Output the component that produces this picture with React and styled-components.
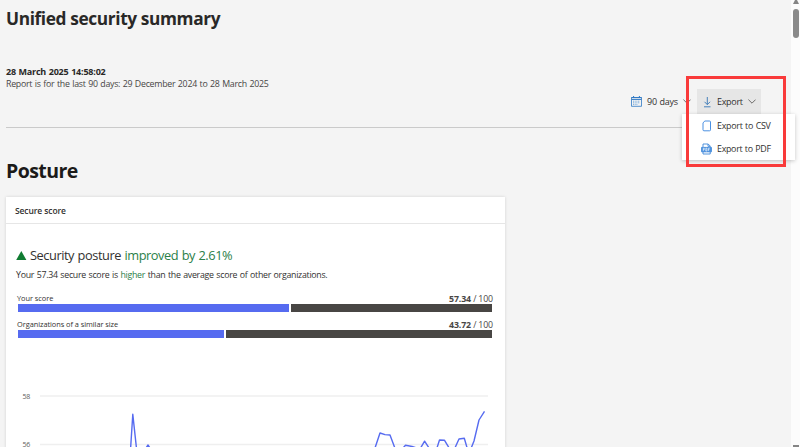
import React from "react";
import styled, { createGlobalStyle } from "styled-components";

const GlobalStyle = createGlobalStyle`
  * { box-sizing: border-box; }
  body { margin: 0; background: #f4f4f4; overflow: hidden; }
`;

const Screen = styled.div`
  display: flex;
  width: 800px;
  height: 447px;
  overflow: hidden;
  background: #f4f4f4;
  color: #323130;
  font-family: "Open Sans", "Noto Sans", sans-serif;
`;

const Main = styled.main`
  flex: 1;
  min-width: 0;
  padding-left: 6px;
`;

const Text = styled.span`
  display: block;
  white-space: nowrap;
  font-size: ${(p) => p.$size}px;
  font-weight: ${(p) => p.$weight || 400};
  line-height: ${(p) => p.$line || 12}px;
  letter-spacing: ${(p) => p.$track || 0}px;
  word-spacing: ${(p) => p.$words || 0}px;
  color: ${(p) => p.$color || "inherit"};
`;

const PageTitle = styled.h1`
  margin: 0;
  padding-top: 7px;
  height: 65px;
  font-size: 17.3px;
  font-weight: 700;
  line-height: 24px;
  letter-spacing: -0.38px;
  color: #292827;
  white-space: nowrap;
`;

const Period = styled.div`
  display: grid;
  grid-template-rows: 13px 11px;
  height: 24px;
`;

const Toolbar = styled.div`
  display: flex;
  justify-content: flex-end;
  height: 25px;
  padding-right: 30px;
`;

const ToolButton = styled.button`
  display: flex;
  align-items: center;
  gap: ${(p) => p.$gap}px;
  width: ${(p) => p.$width}px;
  height: 25px;
  padding: 0 0 0 5px;
  border: 0;
  font-family: inherit;
  color: #323130;
  background: ${(p) => (p.$open ? "#e6e6e6" : "transparent")};
`;

const MenuAnchor = styled.div`
  position: relative;
`;

const Menu = styled.div`
  position: absolute;
  z-index: 2;
  top: 25px;
  left: -15px;
  width: 113px;
  height: 46px;
  background: #fff;
  box-shadow: 0 1px 4px rgba(0, 0, 0, 0.22);
`;

const MenuItem = styled.div`
  display: flex;
  align-items: center;
  gap: 5px;
  height: 23px;
  padding-left: 19px;
`;

const Highlight = styled.div`
  position: absolute;
  z-index: 3;
  top: -13px;
  left: -11px;
  width: 100px;
  height: 91px;
  border: 3px solid #f93a3a;
  pointer-events: none;
`;

const Rule = styled.hr`
  margin: 12.5px 0 0;
  width: 784px;
  max-width: 100%;
  border: 0;
  height: 1px;
  background: #cacaca;
`;

const SectionTitle = styled.h2`
  margin: 0;
  height: 69.5px;
  padding-top: 29px;
  font-size: 19.5px;
  font-weight: 700;
  line-height: 28px;
  letter-spacing: -0.55px;
  color: #1b1a19;
`;

const Card = styled.section`
  width: 499px;
  height: 270px;
  background: #fff;
  box-shadow: 0 0 3px rgba(0, 0, 0, 0.14);
`;

const CardHeader = styled.header`
  height: 27px;
  padding: 8px 9px 0;
  border-bottom: 1px solid #e6e6e6;
`;

const Headline = styled.div`
  display: flex;
  align-items: center;
  gap: 3px;
  height: 20px;
  margin: 21px 0 0 10px;
`;

const Summary = styled.div`
  margin: 4px 0 11px 10px;
  height: 12px;
`;

const Green = styled.span`
  color: #2b8049;
`;

const Score = styled.div`
  width: 477px;
  height: 26px;
  margin-left: 11px;
`;

const ScoreLabels = styled.div`
  display: flex;
  justify-content: space-between;
  height: 12px;
  padding-right: 1px;
`;

const ScoreBar = styled.div`
  display: grid;
  grid-template-columns: ${(p) => p.$value}fr ${(p) => 100 - p.$value}fr;
  gap: 2px;
  width: 474px;
  height: 8px;
  margin-left: 1px;
`;

const Segment = styled.div`
  background: ${(p) => (p.$filled ? "#566bf0" : "#484644")};
`;

const Chart = styled.div`
  display: grid;
  grid-template-columns: 24px 450px;
  height: 70px;
  margin-top: 45px;
`;

const Axis = styled.div`
  display: grid;
  grid-template-rows: 48px 12px;
  padding-top: 2px;
  text-align: right;
`;

const Plot = styled.svg`
  display: block;
  margin-left: 10px;
  width: 450px;
  height: 61px;
`;

const Scrollbar = styled.aside`
  display: flex;
  flex-direction: column;
  justify-content: space-between;
  align-items: center;
  width: 9px;
  height: 447px;
  padding-left: 1px;
  background: #fcfcfc;
`;

const Thumb = styled.div`
  width: 6px;
  height: 29px;
  margin-top: 5px;
  border-radius: 3px;
  background: #8a8a8a;
`;

const Chevron = () => (
  <svg width="8" height="5" viewBox="0 0 8 5" fill="none" stroke="#605e5c" strokeWidth="0.9">
    <path d="M.4.6 4 4.2 7.6.6" />
  </svg>
);

const CalendarIcon = () => (
  <svg width="11" height="11" viewBox="0 0 11 11" fill="none" stroke="#2f78c4">
    <path d="M.5 1.5h10v8.8H.5z" strokeWidth=".8" />
    <path d="M.5 1.6h10M.5 3.4h10M2.6 0v2M8.4 0v2" strokeWidth="1" />
    <path d="M2 5.2h7M2 6.8h7M2 8.4h5" stroke="#5b9bd8" strokeWidth=".8" strokeDasharray="1 .7" />
  </svg>
);

const DownloadIcon = () => (
  <svg width="10" height="12" viewBox="0 0 10 12" fill="none" stroke="#3676b5" strokeWidth=".9">
    <path d="M5.3 1v7.5M2.5 5.8l2.8 2.8 2.8-2.8M2 10.8h6.5" />
  </svg>
);

const PageIcon = () => (
  <svg width="11" height="12" viewBox="0 0 11 12" fill="none" stroke="#4a90e2" strokeWidth="1">
    <path d="M3.9 1h4.6q1 0 1 1v7.8q0 1-1 1H3q-1 0-1-1V2.8z" strokeLinejoin="round" />
  </svg>
);

const PdfIcon = () => (
  <svg width="11" height="12" viewBox="0 0 11 12" fill="none" stroke="#3f88d9" strokeWidth=".9">
    <path d="M2 4V1h5.2L9.2 3v1M2 9v2h7.2V9M7 1v2.3h2" />
    <path d="M.6 4.4h9.8v4.4H.6z" fill="#4f94e0" />
    <path d="M2.3 8V5.2h1v1.3h-1M4.8 8V5.2h1.1V8zM7.4 8V5.2h1.5M7.4 6.6h1" stroke="#fff" strokeWidth=".6" />
  </svg>
);

const RiseIcon = () => (
  <svg width="11" height="9" viewBox="0 0 11 9">
    <path d="M5.3 0 10.4 9H.2z" fill="#107c32" />
  </svg>
);

const linePaths = [
  "M90.3 64 92.8 25.3 97 64",
  "M104 62 108 56 112 62",
  "M334 62 340 44 345 45.6 350 46 356 62",
  "M363 59 365.5 56.3 372 57.5 380 60 384.6 52.2 391 62",
  "M396 62 399.5 51 404.4 51.2 411 62",
  "M414 61 419 50 424.3 49.3 428 62",
  "M430 62 434 52 439 31 444.5 22.3",
];

const scores = [
  { label: "Your score", value: 57.34 },
  { label: "Organizations of a similar size", value: 43.72 },
];

export default function App() {
  return (
    <Screen>
      <GlobalStyle />
      <Main>
        <PageTitle>Unified security summary</PageTitle>
        <Period>
          <Text $size={9} $weight={700} $line={13} $track={-0.2} $words={0.5} $color="#292827">
            28 March 2025 14:58:02
          </Text>
          <Text $size={8.8} $track={-0.27} $words={0.6} $color="#484644">
            Report is for the last 90 days: 29 December 2024 to 28 March 2025
          </Text>
        </Period>
        <Toolbar>
          <ToolButton $width={71} $gap={5}>
            <CalendarIcon />
            <Text $size={9} $track={-0.26} $words={0.7}>90 days</Text>
            <Chevron />
          </ToolButton>
          <MenuAnchor>
            <ToolButton $width={64} $gap={5} $open>
              <DownloadIcon />
              <Text $size={9} $track={-0.3}>Export</Text>
              <Chevron />
            </ToolButton>
            <Menu>
              <MenuItem>
                <PageIcon />
                <Text $size={8.9} $track={-0.26} $words={0.5}>Export to CSV</Text>
              </MenuItem>
              <MenuItem>
                <PdfIcon />
                <Text $size={8.9} $track={-0.3} $words={0.5}>Export to PDF</Text>
              </MenuItem>
            </Menu>
            <Highlight />
          </MenuAnchor>
        </Toolbar>
        <Rule />
        <SectionTitle>Posture</SectionTitle>
        <Card>
          <CardHeader>
            <Text $size={8.5} $weight={600} $track={-0.1}>Secure score</Text>
          </CardHeader>
          <Headline>
            <RiseIcon />
            <Text $size={12.8} $line={20} $track={-0.44} $words={0.6}>
              Security posture <Green>improved by 2.61%</Green>
            </Text>
          </Headline>
          <Summary>
            <Text $size={8.8} $track={-0.28} $words={0.6}>
              Your 57.34 secure score is <Green>higher</Green> than the average score of other organizations.
            </Text>
          </Summary>
          {scores.map((s) => (
            <Score key={s.label}>
              <ScoreLabels>
                <Text $size={7.4} $line={12} $track={-0.05}>{s.label}</Text>
                <Text $size={8.8} $line={14} $track={-0.15} $color="#484644">
                  <b>{s.value}</b> / 100
                </Text>
              </ScoreLabels>
              <ScoreBar $value={s.value}>
                <Segment $filled />
                <Segment />
              </ScoreBar>
            </Score>
          ))}
          <Chart>
            <Axis>
              <Text $size={7} $track={-0.2} $color="#605e5c">58</Text>
              <Text $size={7} $track={-0.2} $color="#605e5c">56</Text>
            </Axis>
            <Plot viewBox="0 0 450 61">
              <path d="M0 7h448M0 55.5h448" stroke="#efefef" strokeWidth="1.5" />
              {linePaths.map((d) => (
                <path key={d} d={d} fill="none" stroke="#566bf0" strokeWidth="1.4" strokeLinejoin="round" />
              ))}
            </Plot>
          </Chart>
        </Card>
      </Main>
      <Scrollbar>
        <div>
          <svg width="6" height="4" viewBox="0 0 6 4" display="block">
            <path d="M2 0h2l2 4H0z" fill="#858585" />
          </svg>
          <Thumb />
        </div>
        <svg width="6" height="2" viewBox="0 0 6 2" display="block">
          <path d="M0 0h6v2H0z" fill="#858585" />
        </svg>
      </Scrollbar>
    </Screen>
  );
}
